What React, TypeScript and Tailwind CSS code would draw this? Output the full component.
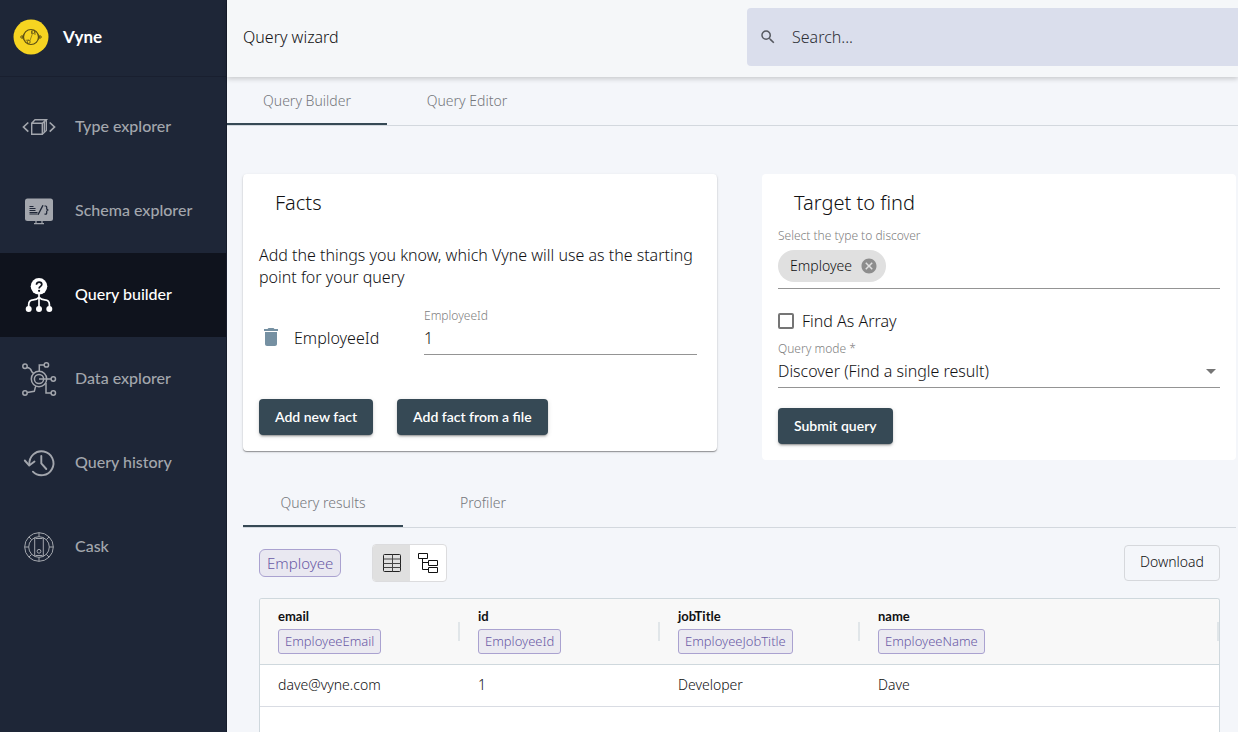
import React, { useState } from "react";
import { MdArrowDropDown, MdCancel, MdDelete, MdSearch } from "react-icons/md";

type IconProps = { className?: string };

function Logo() {
  return (
    <svg viewBox="0 0 36 36" className="size-9" aria-hidden="true">
      <circle cx="18" cy="18" r="17.5" fill="#f6d421" />
      <g fill="none" stroke="#5c4f14" strokeWidth="1">
        <circle cx="18" cy="18" r="7.5" strokeWidth="1.2" />
        <path d="M11.2 15.400 9.200 17.200M11.200 20.600 9.200 18.900M24.800 15.400 26.800 17.200M24.800 20.600 26.800 18.900" />
        <circle cx="8.800" cy="18" r="1.100" />
        <circle cx="27.200" cy="18" r="1.100" />
        <path d="M19.500 14.500 16.800 22" strokeWidth=".6" />
        <circle cx="20.300" cy="13" r="1.500" strokeWidth=".8" />
        <circle cx="15.700" cy="22.900" r="1.500" strokeWidth=".8" />
        <path d="M18.600 11.500v3.500M12.500 21.300l3.500-.3M22 12v4" strokeWidth=".7" />
      </g>
    </svg>
  );
}

function TypeIcon({ className }: IconProps) {
  return (
    <svg viewBox="0 0 34 34" className={className} fill="none" stroke="currentColor" strokeWidth="1.400" aria-hidden="true">
      <path d="M6.300 12.500 1.500 17l4.800 4.600M27.700 12.500l4.800 4.500-4.800 4.600" strokeWidth="1.700" />
      <path d="M9.700 13.300h10.600v11H9.700zM9.700 13.300l3.300-3.500h11.300l-4 3.500M24.300 9.800v10.600l-4 3.900M22.300 11.500v10.800" />
    </svg>
  );
}

function SchemaIcon({ className }: IconProps) {
  return (
    <svg viewBox="0 0 34 34" className={className} fill="none" aria-hidden="true">
      <rect x="3" y="4.500" width="28" height="22.500" rx="2.500" fill="currentColor" />
      <path d="M14 27v2.300M20 27v2.300M12 29.600h10" stroke="currentColor" strokeWidth="1.200" />
      <path d="M7.500 12.500h4M7.500 14.500h6M7.500 16.500h6M7.500 18.500h8M7.500 20h8" stroke="#1e2637" strokeWidth="1" />
      <path d="M16 20.800l5-9.600" stroke="#1e2637" strokeWidth="1.400" />
      <path d="M22.500 12h1.200q1 0 1 1v2l1.200 1-1.200 1v2.200q0 1-1 1h-1.200" stroke="#1e2637" strokeWidth="1.200" />
    </svg>
  );
}

function QueryIcon({ className }: IconProps) {
  return (
    <svg viewBox="0 0 34 34" className={className} fill="none" aria-hidden="true">
      <circle cx="17" cy="8.300" r="8.300" fill="currentColor" />
      <path d="M14.500 6.700c0-3.500 5.300-3.200 5.300-.1 0 1.900-2.700 1.800-2.700 4" stroke="#0f131d" strokeWidth="1.700" />
      <circle cx="17.100" cy="12.800" r="1.100" fill="#0f131d" />
      <path d="M17 16v13M6.700 30v-3.500c0-3 1.800-4.500 4.600-4.700 3-.2 4.300-.8 5.700-2.600 1.400 1.800 2.700 2.400 5.700 2.600 2.800.2 4.700 1.700 4.700 4.700V30" stroke="currentColor" strokeWidth="1.700" />
      <circle cx="6.700" cy="31" r="3" fill="currentColor" />
      <circle cx="17" cy="31" r="3" fill="currentColor" />
      <circle cx="27.300" cy="31" r="3" fill="currentColor" />
    </svg>
  );
}

function DataIcon({ className }: IconProps) {
  return (
    <svg viewBox="0 0 34 34" className={className} fill="none" stroke="currentColor" strokeWidth="1.500" aria-hidden="true">
      <circle cx="17" cy="17" r="7.700" />
      <circle cx="17" cy="17" r="4.600" />
      <circle cx="3" cy="4.200" r="2.200" />
      <circle cx="24.400" cy="2.900" r="2.200" />
      <circle cx="31.300" cy="17" r="2.200" />
      <circle cx="31.300" cy="31" r="2.200" />
      <circle cx="3" cy="31" r="2.200" />
      <path d="M5 5.500c3 .2 4 2 4.500 3.500.4 1.300 1.300 1.600 2.300 2.500M17.300 9.300V2.900H22M17 17h12M24 21v10h5M5.200 30.500l7-1.200c1-2 .5-3.500 1.800-5.200" />
    </svg>
  );
}

function HistoryIcon({ className }: IconProps) {
  return (
    <svg viewBox="0 0 34 34" className={className} fill="none" stroke="currentColor" strokeWidth="1.900" strokeLinecap="round" aria-hidden="true">
      <path d="M7.500 18.500A12 12 0 1 1 10.900 25.700" />
      <path d="m2.800 14.500 4.400 4.900 5.300-3.900M19.300 10v7.500l5 5.500" />
    </svg>
  );
}

function CaskIcon({ className }: IconProps) {
  return (
    <svg viewBox="0 0 34 34" className={className} fill="none" stroke="currentColor" strokeWidth="1" aria-hidden="true">
      <circle cx="17" cy="17" r="14.300" />
      <circle cx="17" cy="17" r="10.300" />
      <path d="M17 2.700v4M17 27.300v4M2.700 17h4M27.300 17h4M6.900 6.900l2.800 2.800M24.300 24.300l2.800 2.800M6.900 27.100l2.800-2.800M24.300 9.700l2.800-2.800M12.700 7.700v18.600M21.300 7.700v18.600M13.500 8.500h7M13.500 25.500h7" />
      <circle cx="17" cy="21.300" r="1.900" />
    </svg>
  );
}

function TableIcon() {
  return (
    <svg viewBox="0 0 20 20" className="size-5" fill="none" aria-hidden="true">
      <rect x="1.500" y="1.500" width="17" height="17" rx="1" stroke="#222" />
      <path d="M1.500 6h17M1.500 10.500h17M1.500 14.500h17M10.500 1.500v17" stroke="#444" />
    </svg>
  );
}

function TreeIcon() {
  return (
    <svg viewBox="0 0 22 22" className="size-[22px]" fill="none" stroke="#111" aria-hidden="true">
      <path d="M1.500 1.500h9v5h-9zM11.500 8.500h9v5h-9zM11.500 15.500h9v5h-9zM5.500 6.500v11h6M5.500 10.500h6" />
    </svg>
  );
}

const navItems = [
  { label: "Type explorer", Icon: TypeIcon },
  { label: "Schema explorer", Icon: SchemaIcon },
  { label: "Query builder", Icon: QueryIcon, active: true },
  { label: "Data explorer", Icon: DataIcon },
  { label: "Query history", Icon: HistoryIcon },
  { label: "Cask", Icon: CaskIcon },
];

const columns = [
  { field: "email", type: "EmployeeEmail", value: "dave@vyne.com" },
  { field: "id", type: "EmployeeId", value: "1" },
  { field: "jobTitle", type: "EmployeeJobTitle", value: "Developer" },
  { field: "name", type: "EmployeeName", value: "Dave" },
];

function Tabs({ labels }: { labels: string[] }) {
  const [selected, setSelected] = useState(0);
  return (
    <div role="tablist" className="flex border-b border-[#d3d8de]">
      {labels.map((label, i) => (
        <button
          key={label}
          type="button"
          role="tab"
          aria-selected={i === selected}
          onClick={() => setSelected(i)}
          className={
            "h-12 w-40 border-b-2 pt-0.5 text-sm text-[#74777c] " +
            (i === selected ? "border-[#364955]" : "border-transparent")
          }
        >
          {label}
        </button>
      ))}
    </div>
  );
}

function PrimaryButton({ children }: { children: React.ReactNode }) {
  return (
    <button
      type="button"
      className="h-9 rounded bg-[#364955] px-4 font-['Lato',sans-serif] text-sm font-semibold text-white shadow-[0_3px_1px_-2px_rgba(0,0,0,0.2),0_2px_2px_rgba(0,0,0,0.14),0_1px_5px_rgba(0,0,0,0.12)]"
    >
      {children}
    </button>
  );
}

function Sidebar() {
  return (
    <aside className="flex w-[227px] shrink-0 flex-col border-r border-[#161c2b] bg-[#1e2637] font-['Lato',sans-serif]">
      <div className="flex h-[77px] items-center gap-[14px] border-b border-[#191f2f] pb-0.5 pl-[13px]">
        <Logo />
        <span className="text-[17px] font-bold text-white">Vyne</span>
      </div>
      <nav className="pt-2">
        {navItems.map(({ label, Icon, active }) => (
          <a
            key={label}
            href="#"
            className={
              "flex h-[84px] items-center gap-[19px] pl-[22px] text-base font-medium " +
              (active ? "bg-[#0f131d] text-white" : "text-[#a3a6ad]")
            }
          >
            <Icon className="size-[34px] overflow-visible" />
            <span className="pb-0.5">{label}</span>
          </a>
        ))}
      </nav>
    </aside>
  );
}

function FactsCard() {
  return (
    <section className="rounded bg-white p-4 shadow-[0_1px_1px_rgba(0,0,0,0.35),0_1px_3px_rgba(0,0,0,0.12)]">
      <h2 className="px-4 text-xl leading-[26px]">Facts</h2>
      <p className="mt-7 leading-[22px]">
        Add the things you know, which Vyne will use as the starting point for your query
      </p>
      <div className="mt-5 flex items-start pr-1">
        <button type="button" aria-label="Remove fact" className="mt-[17px] text-[#7590a2]">
          <MdDelete className="size-6" />
        </button>
        <span className="mt-[18px] ml-[11px] w-[130px] leading-6">EmployeeId</span>
        <div className="flex-1 border-b border-[#949494]">
          <label htmlFor="employee-id" className="block text-xs leading-4 text-[#808080]">
            EmployeeId
          </label>
          <input id="employee-id" defaultValue="1" className="mt-0.5 mb-1 block h-6 w-full bg-transparent outline-none" />
        </div>
      </div>
      <div className="mt-11 flex gap-6">
        <PrimaryButton>Add new fact</PrimaryButton>
        <PrimaryButton>Add fact from a file</PrimaryButton>
      </div>
    </section>
  );
}

function TargetCard() {
  return (
    <section className="rounded bg-white p-4">
      <h2 className="px-4 text-xl leading-[26px]">Target to find</h2>
      <div className="mt-3 border-b border-[#949494] pb-1.5">
        <div className="text-xs leading-4 text-[#808080]">Select the type to discover</div>
        <div className="mt-1.5 inline-flex h-8 items-center gap-2 rounded-full bg-[#e0e0e0] pr-2 pl-3 text-sm">
          Employee
          <button type="button" aria-label="Remove Employee" className="text-[#8d8d8d]">
            <MdCancel className="size-[18px]" />
          </button>
        </div>
      </div>
      <label className="mt-5 flex w-fit items-center gap-2 leading-6">
        <input type="checkbox" className="size-4 appearance-none rounded-xs border-2 border-[#757575] checked:bg-[#364955]" />
        Find As Array
      </label>
      <div className="relative mt-2 border-b border-[#949494]">
        <label htmlFor="query-mode" className="block text-xs leading-4 text-[#808080]">
          Query mode *
        </label>
        <select id="query-mode" className="mt-0.5 mb-1 block h-6 w-full appearance-none bg-transparent outline-none">
          <option>Discover (Find a single result)</option>
        </select>
        <MdArrowDropDown className="pointer-events-none absolute right-[-3px] bottom-1 size-6 text-[#757575]" />
      </div>
      <div className="mt-5">
        <PrimaryButton>Submit query</PrimaryButton>
      </div>
    </section>
  );
}

function Results() {
  return (
    <section className="mt-[19px] flex flex-1 flex-col">
      <Tabs labels={["Query results", "Profiler"]} />
      <div className="flex items-center px-4 pt-4 pb-4">
        <span className="flex h-7 items-center rounded-md border border-[#aaa2d0] bg-[#e9e8f1] px-[7px] text-[15px] text-[#6a5aa6]">
          Employee
        </span>
        <div className="ml-[31px] flex h-[38px] overflow-hidden rounded border border-[#dcdcde] bg-white">
          <button type="button" aria-label="Table view" aria-pressed="true" className="flex w-[37px] items-center justify-center bg-[#e0e0e0]">
            <TableIcon />
          </button>
          <button type="button" aria-label="Tree view" aria-pressed="false" className="flex w-9 items-center justify-center">
            <TreeIcon />
          </button>
        </div>
        <button type="button" className="ml-auto h-9 rounded border border-[#d6d8dc] px-[15px] pb-0.5 text-sm">
          Download
        </button>
      </div>
      <div className="mr-4 ml-4 flex-1 overflow-hidden rounded-t-[3px] border border-b-0 border-[#cfd8dd] bg-white">
        <table className="w-full table-fixed border-collapse text-left text-sm">
          <colgroup>
            <col className="w-[200px]" />
            <col className="w-[200px]" />
            <col className="w-[200px]" />
            <col />
          </colgroup>
          <thead>
            <tr className="h-[65px] border-b border-[#cfd8dd] bg-[#f8f8f8]">
              {columns.map(({ field, type }) => (
                <th key={field} scope="col" className="p-0 font-light">
                  <div className="flex items-center justify-between pl-[18px]">
                    <div>
                      <div className="font-['Lato',sans-serif] text-[13px] leading-4 font-bold">{field}</div>
                      <div className="mt-[5px] w-fit rounded-[3px] border border-[#aaa2d0] bg-[#ebeaf1] px-1.5 text-[13px] leading-[23px] text-[#6a5aa6]">
                        {type}
                      </div>
                    </div>
                    <span className="h-[19px] w-0.5 bg-[#e1e6e9]" />
                  </div>
                </th>
              ))}
            </tr>
          </thead>
          <tbody>
            <tr className="h-[42px] border-b border-[#d9dce3]">
              {columns.map(({ field, value }) => (
                <td key={field} className="p-0 pl-[18px]">
                  {value}
                </td>
              ))}
            </tr>
          </tbody>
        </table>
      </div>
    </section>
  );
}

export default function App() {
  return (
    <div className="flex min-h-screen bg-[#f4f6fa] font-['Noto_Sans',sans-serif] text-base font-light text-[#111113]">
      <Sidebar />
      <div className="flex min-w-0 flex-1 flex-col">
        <header className="z-10 flex h-[77px] items-start justify-between bg-[#f5f7f9] pt-2 pl-4 shadow-[0_2px_5px_rgba(0,0,0,0.18)]">
          <h1 className="leading-[58px]">Query wizard</h1>
          <label className="flex h-[58px] w-[491px] items-center gap-[15px] rounded-l bg-[#dadeec] pl-3">
            <MdSearch className="size-[18px] text-[#55585f]" />
            <input
              type="search"
              aria-label="Search"
              placeholder="Search..."
              className="flex-1 bg-transparent outline-none placeholder:text-[#2d2f35]"
            />
          </label>
        </header>
        <Tabs labels={["Query Builder", "Query Editor"]} />
        <main className="flex flex-1 flex-col pt-12 pr-0.5 pl-4">
          <div className="grid grid-cols-2 items-start gap-[45px]">
            <FactsCard />
            <TargetCard />
          </div>
          <Results />
        </main>
      </div>
    </div>
  );
}
